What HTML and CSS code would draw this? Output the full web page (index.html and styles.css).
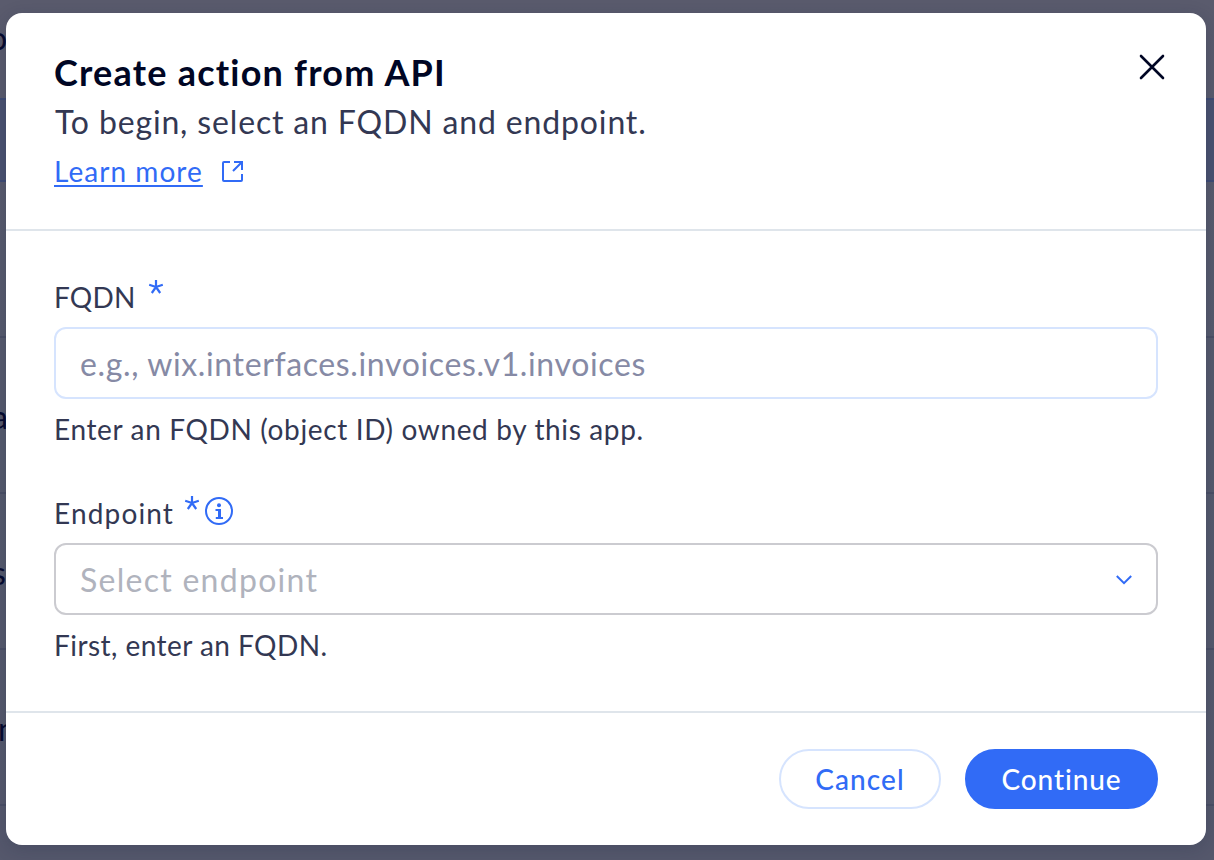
FILE: index.html
```
<!DOCTYPE html>
<html lang="en">
<head>
<meta charset="utf-8">
<title>Create action from API</title>
<link rel="stylesheet" href="styles.css">
</head>
<body>
<div class="page" aria-hidden="true">
  <div class="page-top"><span class="cut cut-o">o</span></div>
  <div class="row row-head"></div>
  <div class="row row-first"></div>
  <div class="row"><span class="cut cut-a">a</span></div>
  <div class="row"><span class="cut cut-s">s</span></div>
  <div class="row"><span class="cut cut-m">m</span></div>
  <div class="row"></div>
</div>
<main class="modal">
  <header class="header">
    <div>
      <h1 class="title">Create action from API</h1>
      <p class="subtitle">To begin, select an FQDN and endpoint.</p>
      <div class="more">
        <a class="link">Learn more</a>
        <svg class="external" width="24" height="24" viewBox="0 0 24 24"><path d="M10 3H4Q3 3 3 4V21Q3 22 4 22H21Q22 22 22 21V15M14 3H22V11M22 3L13 12"/></svg>
      </div>
    </div>
    <svg class="close" width="28" height="28" viewBox="0 0 28 28"><path d="M3 3L25 25M25 3L3 25"/></svg>
  </header>
  <section class="content">
    <div class="field">
      <div class="label"><span class="t-fqdn">FQDN</span><svg class="star star-fqdn" width="16" height="16" viewBox="0 0 16 16"><path d="M8 8V1M8 8L1.2 5.8M8 8L14.8 5.8M8 8L3.8 14M8 8L12.2 14"/></svg></div>
      <div class="input"><span class="t-eg">e.g., wix.interfaces.invoices.v1.invoices</span></div>
      <div class="hint t-hint1">Enter an FQDN (object ID) owned by this app.</div>
    </div>
    <div class="field">
      <div class="label"><span class="t-end">Endpoint</span><svg class="star star-end" width="16" height="16" viewBox="0 0 16 16"><path d="M8 8V1M8 8L1.2 5.8M8 8L14.8 5.8M8 8L3.8 14M8 8L12.2 14"/></svg><svg class="info" width="28" height="28" viewBox="0 0 28 28"><circle class="ring" cx="14" cy="14" r="13"/><circle cx="14" cy="8.2" r="2"/><path d="M10.5 12h5.5v8h2v2h-7.2v-2h2.2v-6h-2.5z"/></svg></div>
      <div class="input select"><span class="t-sel">Select endpoint</span><svg class="chevron" width="16" height="10" viewBox="0 0 16 10"><path d="M.8 1L8 8.2L15.2 1"/></svg></div>
      <div class="hint t-hint2">First, enter an FQDN.</div>
    </div>
  </section>
  <footer class="footer">
    <button class="button cancel">Cancel</button>
    <button class="button continue">Continue</button>
  </footer>
</main>
</body>
</html>
```
FILE: styles.css
```
* { box-sizing: border-box; }
body { margin: 0; width: 1214px; height: 860px; overflow: hidden; position: relative; background: #56596c; font-family: Lato, "Noto Sans", sans-serif; color: #333853; }
.page { position: absolute; inset: 0; overflow: hidden; background: linear-gradient(#5a5b6d, #555a6d 50%, #55586c); color: #05092e; font-size: 32px; line-height: 40px; }
.page-top { height: 98px; padding-top: 18px; }
.row { height: 156px; border-top: 2px solid #4a4f65; padding-top: 59px; }
.row-head { height: 82px; background: #4a5270; border-top-color: #3e4b74; }
.row-first { border-top-color: #3e4b74; }
.cut { display: block; }
.cut-o { margin-left: -11px; }
.cut-a { margin-left: -8px; }
.cut-s { margin-left: -8px; }
.cut-m { margin-left: -2px; }
.modal { position: relative; margin: 13px 0 0 6px; width: 1200px; height: 832px; border-radius: 16px; background: #fff; box-shadow: 0 4px 18px rgba(20, 30, 60, .2); display: flex; flex-direction: column; }
.header { height: 218px; padding: 35px 40px 0 48px; border-bottom: 2px solid #dfe5eb; display: flex; justify-content: space-between; align-items: flex-start; }
.title { margin: 0; font-size: 36px; line-height: 48px; font-weight: 700; letter-spacing: 1.22px; color: #000624; white-space: nowrap; }
.subtitle { margin: 2px 0 0; padding-left: 1px; font-size: 32px; line-height: 48px; letter-spacing: .85px; white-space: nowrap; }
.more { display: flex; align-items: center; height: 48px; margin-top: 1px; gap: 17px; }
.link { color: #316bf6; font-size: 28px; line-height: 36px; letter-spacing: 1.05px; text-decoration: underline; text-decoration-thickness: 2px; text-underline-offset: 3px; white-space: nowrap; }
svg { display: block; flex: none; fill: none; stroke: #316bf6; stroke-width: 2; }
.close { margin-top: 5px; stroke: #000624; stroke-width: 2.6; stroke-linecap: round; }
.content { height: 482px; padding: 48px 48px 0; border-bottom: 2px solid #dfe5eb; }
.field { height: 216px; }
.label { height: 48px; display: flex; align-items: flex-start; font-size: 28px; line-height: 36px; }
.t-fqdn { letter-spacing: .2px; }
.t-end { letter-spacing: 1.15px; }
.star { stroke-width: 2.2; }
.star-fqdn { margin-left: 12px; }
.star-end { margin-left: 10px; }
.info { margin: 2px 0 0 5px; stroke: none; fill: #316bf6; }
.ring { fill: none; stroke: #316bf6; stroke-width: 2; }
.input { height: 72px; border: 2px solid #d6e4fe; border-radius: 12px; padding: 2px 24px 0; display: flex; align-items: center; justify-content: space-between; font-size: 32px; line-height: 48px; color: #868aa5; }
.t-eg { letter-spacing: .63px; }
.t-sel { letter-spacing: 1.27px; }
.select { border-color: #cbcbd0; color: #b0b3bd; }
.hint { margin-top: 12px; font-size: 28px; line-height: 36px; white-space: nowrap; }
.t-hint1 { letter-spacing: .64px; }
.t-hint2 { letter-spacing: .45px; }
.footer { flex: 1; padding: 36px 48px 0; display: flex; justify-content: flex-end; gap: 24px; }
.button { height: 60px; border-radius: 30px; padding: 0; border: 2px solid #d6e4fe; background: #fff; color: #316bf6; font: 500 28px/36px Lato, sans-serif; letter-spacing: 1.1px; }
.cancel { width: 162px; }
.continue { width: 193px; background: #316bf6; border-color: #316bf6; color: #fff; letter-spacing: .9px; }
```
